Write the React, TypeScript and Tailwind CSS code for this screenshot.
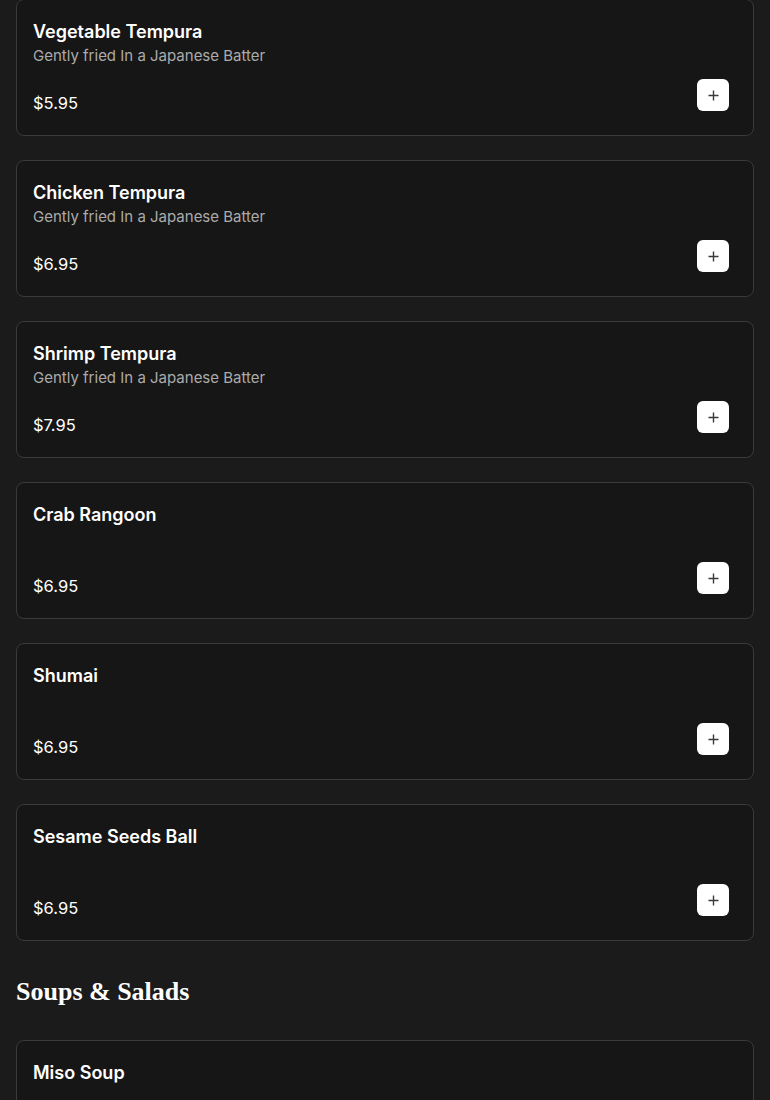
import React from 'react';

type Item = { name: string; desc?: string; price: string };

const appetizers: Item[] = [
  { name: 'Vegetable Tempura', desc: 'Gently fried In a Japanese Batter', price: '$5.95' },
  { name: 'Chicken Tempura', desc: 'Gently fried In a Japanese Batter', price: '$6.95' },
  { name: 'Shrimp Tempura', desc: 'Gently fried In a Japanese Batter', price: '$7.95' },
  { name: 'Crab Rangoon', price: '$6.95' },
  { name: 'Shumai', price: '$6.95' },
  { name: 'Sesame Seeds Ball', price: '$6.95' }
];

const soups: Item[] = [{ name: 'Miso Soup', price: '$3.95' }];

const PlusIcon = () => (
  <svg width="11" height="11" viewBox="0 0 11 11" fill="none" stroke="#3a3a3a" strokeWidth="1.4">
    <path d="M5.5 0.5v10M0.5 5.5h10" />
  </svg>
);

const MenuCard: React.FC<{ item: Item }> = ({ item }) => (
  <div className="rounded-lg border border-[#3a3a3a] bg-[#161616] pt-5 pr-6 pb-6 pl-4">
    <h3 className="text-[18px] leading-6 font-semibold text-white">{item.name}</h3>
    <p className="h-6 text-[15px] leading-6 text-[#ababab]">{item.desc}</p>
    <div className="mt-[11px] flex items-start justify-between">
      <span className="mt-3 -mb-1 text-[16.5px] leading-6 text-white">{item.price}</span>
      <button className="flex h-8 w-8 items-center justify-center rounded-md bg-white">
        <PlusIcon />
      </button>
    </div>
  </div>
);

export default function App() {
  return (
    <div className="min-h-[1100px] bg-[#1b1b1b] px-4 font-['Inter',sans-serif]">
      <div className="-mt-px flex flex-col gap-6">
        {appetizers.map((item) => (
          <MenuCard key={item.name} item={item} />
        ))}
      </div>
      <h2 className="mt-[35px] mb-[32px] font-['Liberation_Serif',serif] text-[26px] leading-8 font-black text-white">
        Soups &amp; Salads
      </h2>
      <div className="flex flex-col gap-6">
        {soups.map((item) => (
          <MenuCard key={item.name} item={item} />
        ))}
      </div>
    </div>
  );
}
